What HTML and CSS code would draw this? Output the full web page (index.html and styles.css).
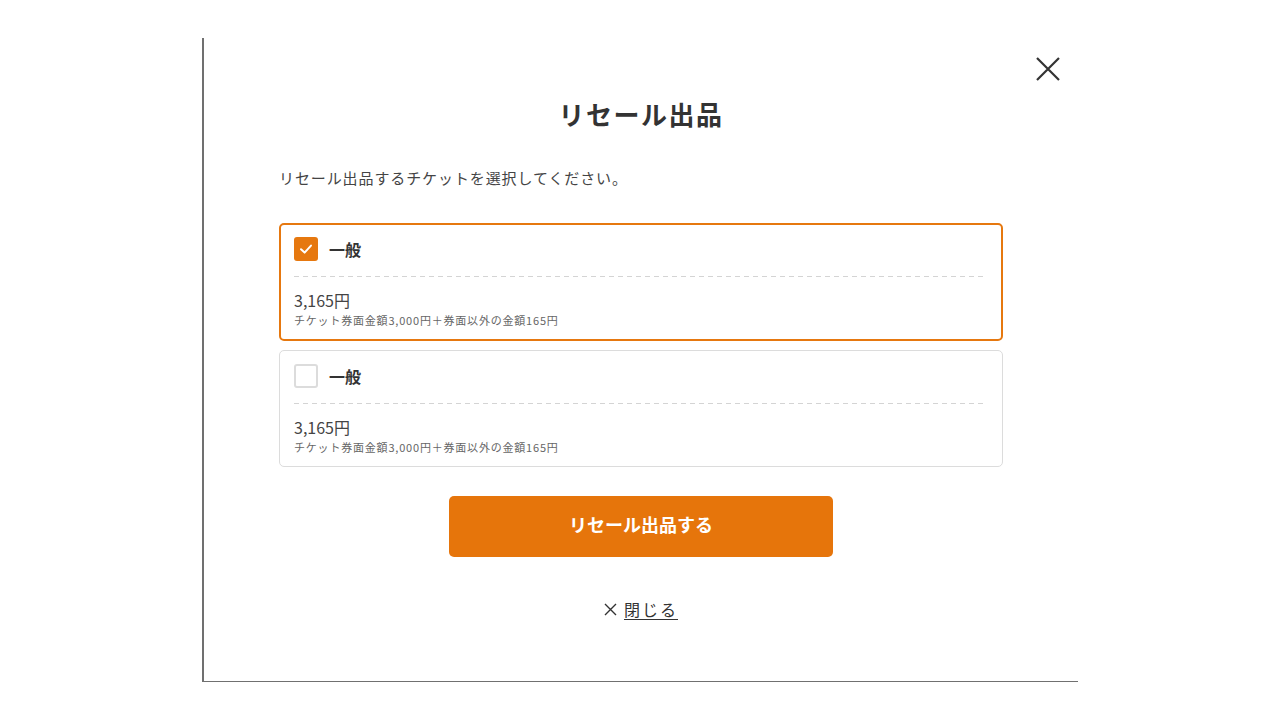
FILE: index.html
```html
<!DOCTYPE html>
<html lang="ja">
<head>
    <meta charset="UTF-8">
    <meta name="viewport" content="width=device-width, initial-scale=1.0">
    <title>リセール出品</title>
    <link rel="stylesheet" href="styles.css">
</head>
<body>

    <div class="modal">
        <!-- Close icon -->
        <button type="button" class="modal-close" aria-label="閉じる">
            <svg width="26" height="26" viewBox="0 0 26 26">
                <path d="M2 2 L24 24 M24 2 L2 24" stroke="#333" stroke-width="2.2" fill="none"/>
            </svg>
        </button>

        <div class="modal-body">
            <h1 class="modal-title">リセール出品</h1>
            <p class="lead">リセール出品するチケットを選択してください。</p>

            <!-- Ticket list -->
            <div class="ticket-list">
                <label class="ticket selected">
                    <div class="ticket-head">
                        <span class="check">
                            <svg width="14" height="14" viewBox="0 0 14 14">
                                <path d="M2 7.2 L5.6 10.6 L12 3.6" stroke="#fff" stroke-width="2" fill="none" stroke-linecap="round" stroke-linejoin="round"/>
                            </svg>
                        </span>
                        <span class="ticket-name">一般</span>
                    </div>
                    <div class="ticket-price">
                        <p class="price">3,165円</p>
                        <p class="price-note">チケット券面金額3,000円＋券面以外の金額165円</p>
                    </div>
                </label>

                <label class="ticket">
                    <div class="ticket-head">
                        <span class="check"></span>
                        <span class="ticket-name">一般</span>
                    </div>
                    <div class="ticket-price">
                        <p class="price">3,165円</p>
                        <p class="price-note">チケット券面金額3,000円＋券面以外の金額165円</p>
                    </div>
                </label>
            </div>

            <div class="actions">
                <button type="button" class="primary">リセール出品する</button>
            </div>

            <div class="close-link">
                <svg width="13" height="13" viewBox="0 0 13 13">
                    <path d="M1 1 L12 12 M12 1 L1 12" stroke="#333" stroke-width="1.4" fill="none"/>
                </svg>
                <a href="#">閉じる</a>
            </div>
        </div>
    </div>

</body>
</html>
```

FILE: styles.css
```css
* {
    margin: 0;
    padding: 0;
    box-sizing: border-box;
}

body {
    font-family: "Noto Sans CJK JP", "Noto Sans", sans-serif;
    background-color: #fff;
    color: #333;
}

.modal {
    position: relative;
    width: 876px;
    height: 644px;
    margin: 38px 0 0 202px;
    border-left: 2px solid #707070;
    border-bottom: 1px solid #707070;
}

.modal-close {
    position: absolute;
    top: 18px;
    right: 17px;
    padding: 0;
    background: none;
    border: none;
    cursor: pointer;
    display: flex;
}

.modal-body {
    width: 724px;
    margin: 0 auto;
    padding-top: 56px;
}

.modal-title {
    font-size: 26px;
    line-height: 39px;
    font-weight: bold;
    text-align: center;
    letter-spacing: 1.5px;
    color: #333;
}

.lead {
    margin-top: 33px;
    font-size: 15px;
    line-height: 24px;
    letter-spacing: 0.9px;
    color: #444;
}

.ticket-list {
    margin-top: 33px;
    display: flex;
    flex-direction: column;
    gap: 9px;
}

.ticket {
    display: block;
    border: 1px solid #dcdcdc;
    border-radius: 5px;
    padding: 13px 15px 11px 14px;
    cursor: pointer;
}

.ticket.selected {
    border: 2px solid #e6780f;
    padding: 12px 14px 11px 13px;
}

.ticket-head {
    display: flex;
    align-items: center;
    gap: 11px;
    height: 24px;
    box-sizing: content-box;
    padding-bottom: 16px;
    /* dashed divider under the ticket name */
    background-image: linear-gradient(to right, #d4d4d4 5px, transparent 5px);
    background-size: 9px 1px;
    background-repeat: repeat-x;
    background-position: left bottom;
}

.check {
    width: 24px;
    height: 24px;
    border: 2px solid #dcdcdc;
    border-radius: 3px;
    background-color: #fff;
    display: flex;
    align-items: center;
    justify-content: center;
}

.ticket.selected .check {
    border: none;
    background-color: #e6780f;
}

.ticket-name {
    font-size: 16px;
    font-weight: bold;
    color: #333;
}

.ticket-price {
    padding-top: 11px;
}

.price {
    font-size: 16px;
    line-height: 24px;
    color: #444;
}

.price-note {
    font-size: 11px;
    line-height: 16px;
    color: #666;
    letter-spacing: 0.8px;
}

.actions {
    margin-top: 29px;
    display: flex;
    justify-content: center;
}

button.primary {
    width: 384px;
    height: 61px;
    padding-bottom: 5px;
    border: none;
    border-radius: 5px;
    background-color: #e6750b;
    color: #fff;
    font-family: inherit;
    font-size: 18px;
    font-weight: bold;
    cursor: pointer;
}

.close-link {
    margin-top: 40px;
    display: flex;
    justify-content: center;
    align-items: center;
    gap: 7px;
    font-size: 16px;
    line-height: 24px;
}

.close-link a {
    color: #333;
    letter-spacing: 2px;
    text-decoration: underline;
    text-underline-offset: 3px;
}
```
